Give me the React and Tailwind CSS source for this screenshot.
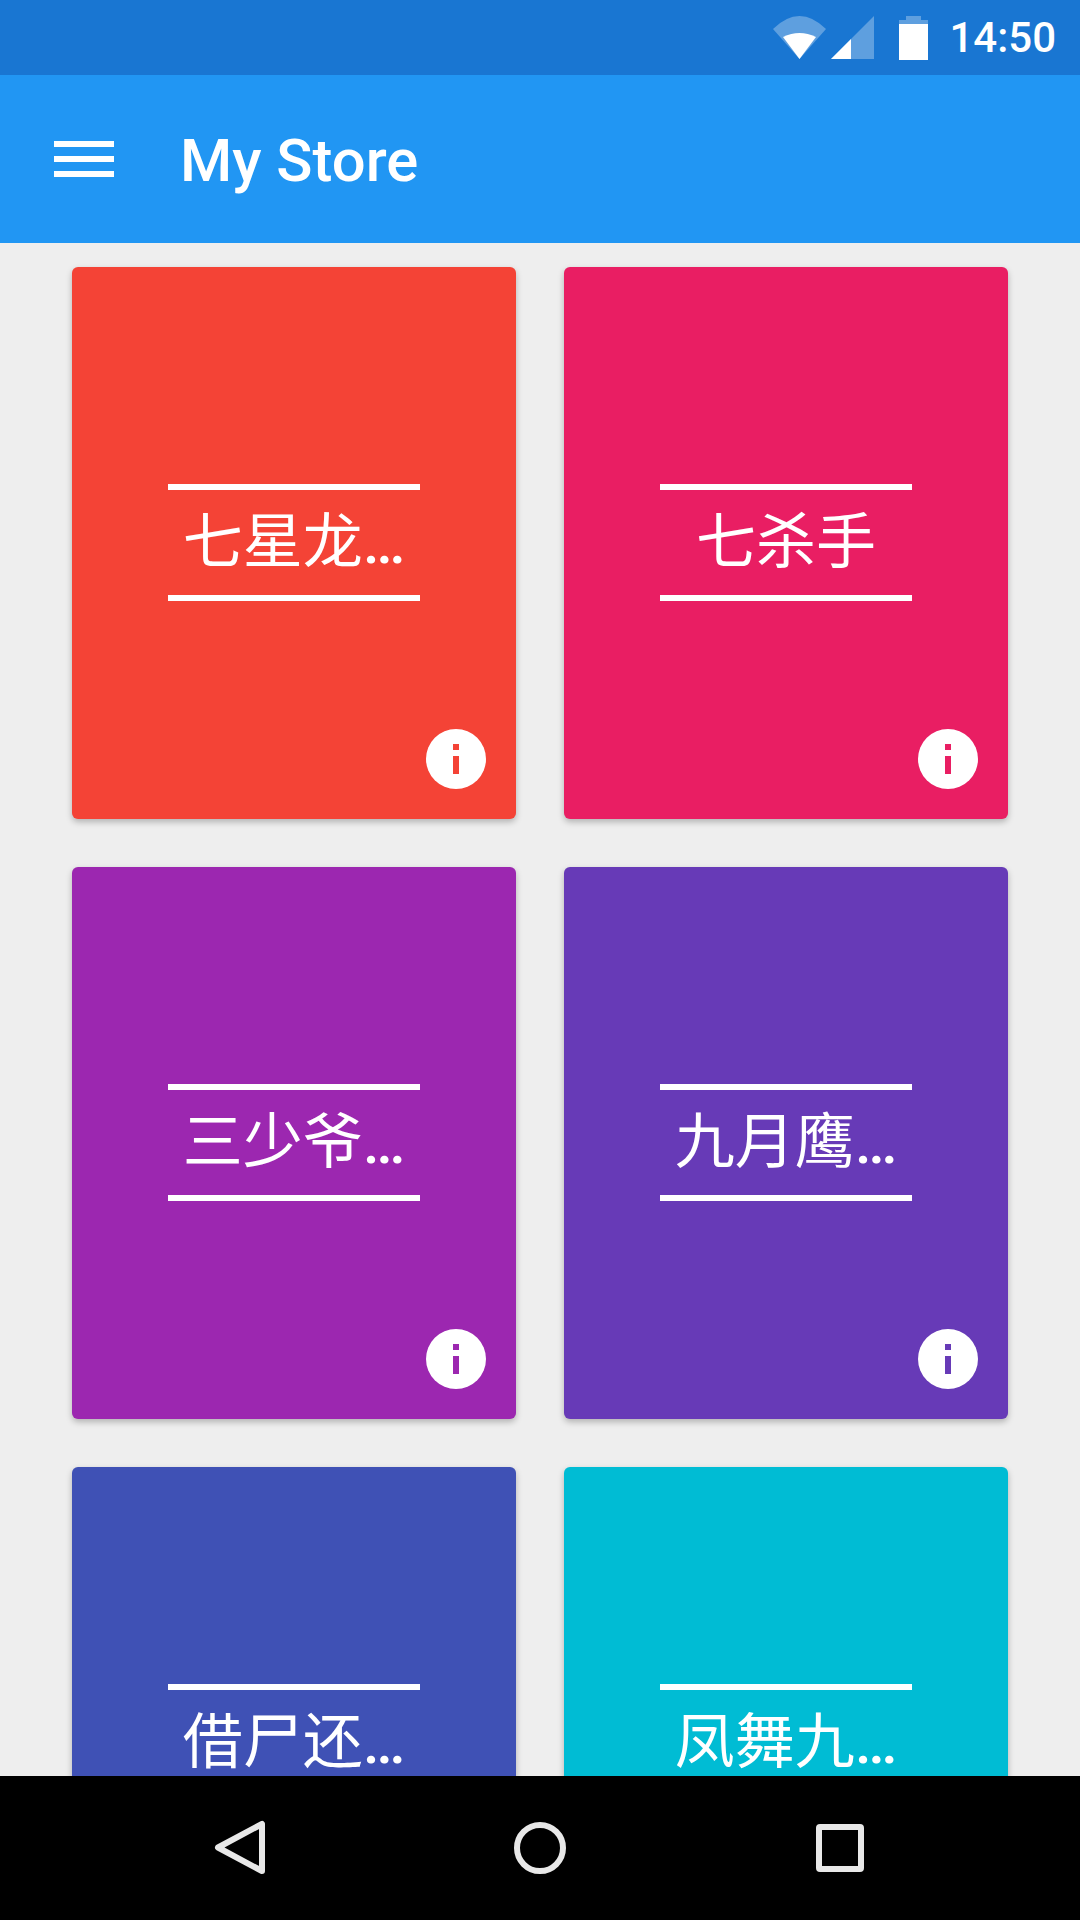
import React from 'react';

const cards = [
  { title: '七星龙', more: true, bg: 'bg-[#f44336]', fg: 'text-[#f44336]' },
  { title: '七杀手', more: false, bg: 'bg-[#e91e63]', fg: 'text-[#e91e63]' },
  { title: '三少爷', more: true, bg: 'bg-[#9c27b0]', fg: 'text-[#9c27b0]' },
  { title: '九月鹰', more: true, bg: 'bg-[#673ab7]', fg: 'text-[#673ab7]' },
  { title: '借尸还', more: true, bg: 'bg-[#3f51b5]', fg: 'text-[#3f51b5]' },
  { title: '凤舞九', more: true, bg: 'bg-[#00bcd4]', fg: 'text-[#00bcd4]' },
];

const StatusBar = () => (
  <div className="flex h-[75px] shrink-0 items-center justify-end bg-[#1976d2] pr-[24px] text-white">
    <svg width="53" height="43" viewBox="0 0 53 43">
      <path d="M0 13Q26.5 -13 53 13L26.5 43Z" fill="#fff" fillOpacity="0.3" />
      <path d="M10 21Q26.5 13 43 21L26.5 43Z" fill="#fff" />
    </svg>
    <svg width="43" height="43" viewBox="0 0 43 43" className="ml-[5px]">
      <path d="M43 0V43H0Z" fill="#fff" fillOpacity="0.3" />
      <path d="M0 43L20 23V43Z" fill="#fff" />
    </svg>
    <svg width="29" height="44" viewBox="0 0 29 44" className="ml-[25px]">
      <path d="M7 0H22V4H29V8H0V4H7Z" fill="#fff" fillOpacity="0.3" />
      <rect x="0" y="8" width="29" height="36" fill="#fff" />
    </svg>
    <span className="ml-[21px] font-['Roboto',sans-serif] text-[42px] font-medium leading-none">14:50</span>
  </div>
);

const AppBar = () => (
  <div className="z-10 flex h-[168px] shrink-0 items-center bg-[#2196f3] pl-[54px] text-white">
    <div className="flex w-[60px] flex-col gap-[9px]">
      <div className="h-[6px] bg-white" />
      <div className="h-[6px] bg-white" />
      <div className="h-[6px] bg-white" />
    </div>
    <h1 className="ml-[66px] pt-[5px] font-['Roboto',sans-serif] text-[59.75px] font-medium leading-none">My Store</h1>
  </div>
);

const Card = ({ title, more, bg, fg }) => (
  <div className={`relative flex h-[552px] items-center justify-center rounded-[6px] shadow-[0_3px_6px_rgba(0,0,0,0.25)] ${bg}`}>
    <div className="mb-[1px] flex h-[117px] w-[252px] items-center justify-center border-y-[6px] border-white pt-[1px] font-['Roboto','Noto_Sans_CJK_SC',sans-serif] text-[60px] leading-none text-white">
      {title}
      {more && <span className="font-medium">…</span>}
    </div>
    <button className="absolute bottom-[30px] right-[30px] flex h-[60px] w-[60px] flex-col items-center justify-center rounded-full bg-white">
      <span className={`h-[6px] w-[6px] bg-current ${fg}`} />
      <span className={`mt-[6px] h-[18px] w-[6px] bg-current ${fg}`} />
    </button>
  </div>
);

const NavBar = () => (
  <div className="relative z-10 h-[144px] shrink-0 bg-black">
    <div className="flex h-full items-center">
      <svg width="54" height="58" viewBox="0 0 54 58" className="ml-[213px]" fill="none" stroke="#e8e8e8" strokeWidth="6" strokeLinejoin="round">
        <path d="M49 5V52L5 28.5Z" />
      </svg>
      <div className="ml-[247px] h-[52px] w-[52px] rounded-full border-[6px] border-[#e8e8e8]" />
      <div className="ml-[250px] h-[48px] w-[48px] rounded-[4px] border-[6px] border-[#e8e8e8]" />
    </div>
  </div>
);

export default function App() {
  return (
    <div className="flex h-[1920px] w-[1080px] flex-col overflow-hidden bg-[#eeeeee]">
      <StatusBar />
      <AppBar />
      <main className="min-h-0 flex-1 overflow-hidden">
        <div className="grid grid-cols-[444px_444px] gap-12 pl-[72px] pt-6">
          {cards.map((card) => (
            <Card key={card.title} {...card} />
          ))}
        </div>
      </main>
      <NavBar />
    </div>
  );
}
